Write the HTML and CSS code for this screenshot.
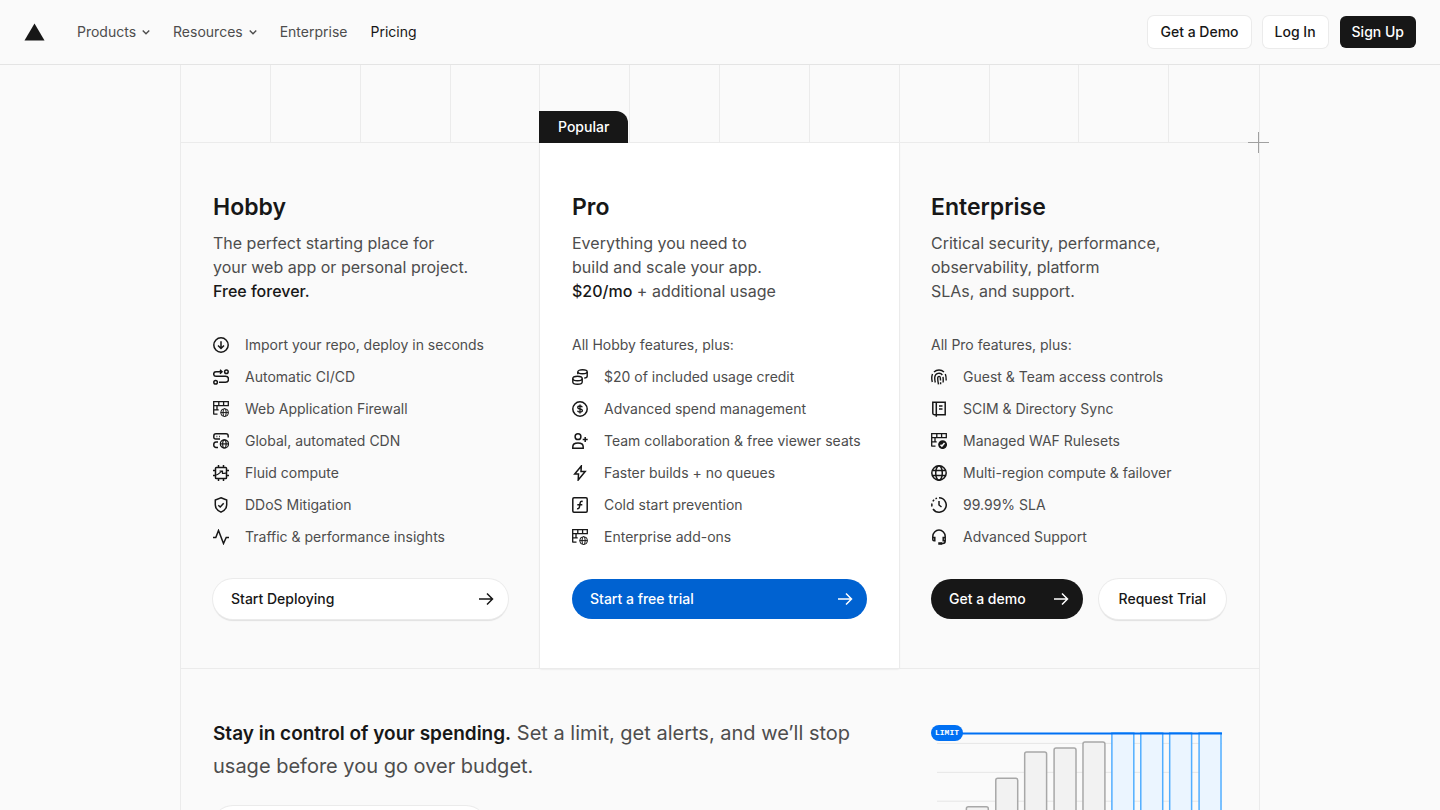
FILE: index.html
```html
<!DOCTYPE html>
<html lang="en">
<head>
  <meta charset="UTF-8" />
  <meta name="viewport" content="width=device-width, initial-scale=1.0"/>
  <title>Pricing</title>
  <link rel="stylesheet" href="styles.css">
</head>
<body>
  <!-- Icon sprite -->
  <svg class="sprite" aria-hidden="true">
    <symbol id="chevron" viewBox="0 0 16 16"><path d="M1.500 5 8 11.500 14.500 5" stroke-width="2.800"/></symbol>
    <symbol id="arrow" viewBox="0 0 16 16"><path d="M1 8h13.500M9 2.500 14.500 8 9 13.500"/></symbol>
    <symbol id="import" viewBox="0 0 16 16"><circle cx="8" cy="8" r="7.200"/><path d="M8 4.300v7M5 8.500l3 3 3-3"/></symbol>
    <symbol id="route" viewBox="0 0 16 16"><circle cx="13.400" cy="2.700" r="1.800"/><circle cx="2.600" cy="13.300" r="1.800"/><path d="M9 2.700H3a2.300 2.300 0 0 0 0 4.600h9.500a3 3 0 0 1 0 6H6M7 .7l2 2-2 2"/></symbol>
    <symbol id="firewall" viewBox="0 0 16 16"><path stroke-width="1.300" d="M.7 13.500V.7h14.600v4.500M.7 4.700h14.600M5.800.7v4M10.600.7v4M.7 8.900h5M4 4.700v4.200M.7 13.100h3.800"/><g stroke-width="1"><circle cx="11.600" cy="11.600" r="3.900"/><ellipse cx="11.600" cy="11.600" rx="1.600" ry="3.900"/><path d="M7.700 11.600h7.800"/></g></symbol>
    <symbol id="cdn" viewBox="0 0 16 16"><path d="M15.200 4.500V3A2.200 2.200 0 0 0 13 .8H3A2.200 2.200 0 0 0 .8 3v1.200A1.800 1.800 0 0 0 2.600 6H7M5 9H3a2.200 2.200 0 0 0-2.200 2.200v1A2.200 2.200 0 0 0 3 14.400h2M3.500 3.500h.8M6 3.500h.8"/><g stroke-width="1.200"><circle cx="11.400" cy="10.900" r="4.100"/><ellipse cx="11.400" cy="10.900" rx="1.700" ry="4.100"/><path d="M7.300 10.900h8.200"/></g></symbol>
    <symbol id="chip" viewBox="0 0 16 16"><rect x="2.500" y="2.500" width="11" height="11" rx=".8"/><path d="M5.500 0v2.500M10.500 0v2.500M5.500 13.500V16M10.500 13.500V16M0 5.500h2.500M0 10.500h2.500M13.500 5.500H16M13.500 10.500H16"/><path stroke-width="1.200" d="M3 10c3 0 3-2.800 6-3.500M6.500 6h3v2.500c1 0 2-.3 3.500-.3"/></symbol>
    <symbol id="shield" viewBox="0 0 16 16"><path d="M8 .8 13.700 3v5c0 3.300-2.400 5.600-5.700 7.200C4.700 13.600 2.300 11.300 2.300 8V3zM5.300 8.200l1.900 1.800 3.500-3.700"/></symbol>
    <symbol id="pulse" viewBox="0 0 16 16"><path d="M0 8.500h2.800L5.500 1.500l5 13 2.700-6H16"/></symbol>
    <symbol id="coins" viewBox="0 0 16 16"><g stroke-width="1.400"><ellipse cx="10.500" cy="2.800" rx="4.700" ry="2"/><path d="M5.800 3v2.300M15.200 3v4.200c0 1-1.200 1.600-3 1.900"/><ellipse cx="5.500" cy="9.500" rx="4.700" ry="2.200"/><path d="M.8 9.500V13c0 1.200 2.100 2.200 4.700 2.200s4.700-1 4.700-2.200V9.500"/></g></symbol>
    <symbol id="dollar" viewBox="0 0 16 16"><circle cx="8" cy="8" r="7.200"/><path stroke-width="1.300" d="M10.300 6.200C10 5.400 9.200 5 8 5c-1.400 0-2.300.5-2.300 1.500S6.500 7.800 8 8s2.400.5 2.400 1.500S9.400 11 8 11s-2.200-.4-2.500-1.300M8 3.500v9"/></symbol>
    <symbol id="user-plus" viewBox="0 0 16 16"><circle cx="6" cy="3.700" r="2.900"/><path d="M.8 15.200v-1.500C.8 11.500 2.700 10 6 10s5.200 1.500 5.200 3.700v1.500zM13.200 4v5M10.700 6.500h5"/></symbol>
    <symbol id="bolt" viewBox="0 0 16 16"><path d="M9.300 1 2.700 9h3.800l-.3 6 7-8.500H9z"/></symbol>
    <symbol id="function" viewBox="0 0 16 16"><rect x=".8" y=".8" width="14.400" height="14.400" rx="1.200"/><path d="M10.700 4.500c-1.800-.5-2.300.3-2.600 1.600L7.400 10c-.3 1.300-.9 2-2.400 1.600M5.300 7.700h5"/></symbol>
    <symbol id="fingerprint" viewBox="0 0 16 16"><path stroke-width="1.400" d="M3 3a7.200 7.200 0 0 1 10 0M1.300 13C.5 10 .5 7.500 1.500 5M14.300 5c.8 1.700.9 3.500.9 6.500M4.300 13.500C3.800 11.500 3.600 10 3.800 8c.4-4 5.500-5 7.500-2M12 7.800c.3 2 .3 3.700.1 5.700M7.500 15.300C7 13 6.500 10.500 6.800 8.500c.3-1.600 2.400-1.500 2.500.2.100 1 .2 1.800.2 2.800M9.600 13.300v2"/></symbol>
    <symbol id="book" viewBox="0 0 16 16"><path d="M1.800 1.200h12.400v12.500H3.300c-1 0-1.500-.6-1.500-1.400zM5.300 1.200v14.500M8 5h3.500M8 8h3.500"/></symbol>
    <symbol id="rules" viewBox="0 0 16 16"><path stroke-width="1.300" d="M.7 13.500V.7h14.600v4.500M.7 4.700h14.600M5.800.7v4M10.600.7v4M.7 8.900h5M4 4.700v4.200M.7 13.100h3.800"/><circle class="solid" cx="11.600" cy="11.600" r="3.700"/><path class="knock" d="m9.500 11.700 1.400 1.400 2.600-3"/></symbol>
    <symbol id="globe" viewBox="0 0 16 16"><circle cx="8" cy="8" r="7.200"/><ellipse cx="8" cy="8" rx="3.300" ry="7.200"/><path d="M1.500 5.500h13M1.500 10.500h13"/></symbol>
    <symbol id="clock" viewBox="0 0 16 16"><path d="M8 .8a7.200 7.200 0 1 1-6 11.200M1 9.500a7 7 0 0 1 0-3M1.900 4.300a7 7 0 0 1 1.200-1.500M4.500 1.700 6 1.100M8 4v4l2.500 2"/></symbol>
    <symbol id="headset" viewBox="0 0 16 16"><path d="M1.800 8.500V7.300a6.200 6.200 0 0 1 12.400 0V12c0 1.500-1 2.500-2.500 2.500H9.500M1.800 8.500h2v3.200H3c-.8 0-1.200-.5-1.200-1.200zM14.200 8.500h-2v3.200H14.200"/><path class="solid" d="M8 14h2.500v1H8z"/></symbol>
  </svg>

  <header class="header">
    <a class="logo" href="#" aria-label="Home">
      <svg viewBox="0 0 22 18"><path d="M11 0 21.500 18H.5z"/></svg>
    </a>
    <nav class="nav">
      <button class="nav-item">Products <svg class="chevron"><use href="#chevron"/></svg></button>
      <button class="nav-item">Resources <svg class="chevron"><use href="#chevron"/></svg></button>
      <a class="nav-item" href="#">Enterprise</a>
      <a class="nav-item current" href="#">Pricing</a>
    </nav>
    <div class="header-actions">
      <button class="btn">Get a Demo</button>
      <button class="btn">Log In</button>
      <button class="btn dark">Sign Up</button>
    </div>
  </header>

  <main class="container">
    <div class="guides">
      <span></span><span></span><span></span><span></span><span></span><span></span>
      <span></span><span></span><span></span><span></span><span></span><span></span>
    </div>

    <!-- Plans -->
    <div class="plans">
      <section class="plan">
        <h2>Hobby</h2>
        <p class="summary">The perfect starting place for<br>your web app or personal project.<br><strong>Free forever.</strong></p>
        <ul class="features">
          <li><svg class="icon"><use href="#import"/></svg>Import your repo, deploy in seconds</li>
          <li><svg class="icon"><use href="#route"/></svg>Automatic CI/CD</li>
          <li><svg class="icon"><use href="#firewall"/></svg>Web Application Firewall</li>
          <li><svg class="icon"><use href="#cdn"/></svg>Global, automated CDN</li>
          <li><svg class="icon"><use href="#chip"/></svg>Fluid compute</li>
          <li><svg class="icon"><use href="#shield"/></svg>DDoS Mitigation</li>
          <li><svg class="icon"><use href="#pulse"/></svg>Traffic &amp; performance insights</li>
        </ul>
        <div class="plan-actions">
          <button class="btn pill wide">Start Deploying <svg class="icon"><use href="#arrow"/></svg></button>
        </div>
      </section>

      <section class="plan popular">
        <span class="tag">Popular</span>
        <h2>Pro</h2>
        <p class="summary">Everything you need to<br>build and scale your app.<br><strong>$20/mo</strong> + additional usage</p>
        <ul class="features">
          <li>All Hobby features, plus:</li>
          <li><svg class="icon"><use href="#coins"/></svg>$20 of included usage credit</li>
          <li><svg class="icon"><use href="#dollar"/></svg>Advanced spend management</li>
          <li><svg class="icon"><use href="#user-plus"/></svg>Team collaboration &amp; free viewer seats</li>
          <li><svg class="icon"><use href="#bolt"/></svg>Faster builds + no queues</li>
          <li><svg class="icon"><use href="#function"/></svg>Cold start prevention</li>
          <li><svg class="icon"><use href="#firewall"/></svg>Enterprise add-ons</li>
        </ul>
        <div class="plan-actions">
          <button class="btn pill wide blue">Start a free trial <svg class="icon"><use href="#arrow"/></svg></button>
        </div>
      </section>

      <section class="plan">
        <span class="cross"></span>
        <h2>Enterprise</h2>
        <p class="summary">Critical security, performance,<br>observability, platform<br>SLAs, and support.</p>
        <ul class="features">
          <li>All Pro features, plus:</li>
          <li><svg class="icon"><use href="#fingerprint"/></svg>Guest &amp; Team access controls</li>
          <li><svg class="icon"><use href="#book"/></svg>SCIM &amp; Directory Sync</li>
          <li><svg class="icon"><use href="#rules"/></svg>Managed WAF Rulesets</li>
          <li><svg class="icon"><use href="#globe"/></svg>Multi-region compute &amp; failover</li>
          <li><svg class="icon"><use href="#clock"/></svg>99.99% SLA</li>
          <li><svg class="icon"><use href="#headset"/></svg>Advanced Support</li>
        </ul>
        <div class="plan-actions">
          <button class="btn pill wide dark">Get a demo <svg class="icon"><use href="#arrow"/></svg></button>
          <button class="btn pill">Request Trial</button>
        </div>
      </section>
    </div>

    <!-- Spend management -->
    <section class="spend">
      <div class="spend-text">
        <p><strong>Stay in control of your spending.</strong> Set a limit, get alerts, and we’ll stop usage before you go over budget.</p>
        <button class="btn pill wide">Learn about Spend Management <svg class="icon"><use href="#arrow"/></svg></button>
      </div>
      <div class="chart">
        <span class="limit">LIMIT</span>
        <svg viewBox="0 0 296 160">
          <path class="rule" d="M6 18.500h286M6 47.500h286M6 76.500h286M6 105.500h286"/>
          <g class="bars">
            <rect x="35.500" y="82" width="22" height="90" rx="2"/>
            <rect x="65" y="53.500" width="22" height="120" rx="2"/>
            <rect x="94" y="27" width="22" height="150" rx="2"/>
            <rect x="123.500" y="23" width="22" height="150" rx="2"/>
            <rect x="152.500" y="17" width="22" height="160" rx="2"/>
          </g>
          <g class="bars over">
            <rect x="181.500" y="8" width="22" height="160"/>
            <rect x="210.500" y="8" width="22" height="160"/>
            <rect x="239.500" y="8" width="22" height="160"/>
            <rect x="269" y="8" width="22" height="160"/>
          </g>
          <path class="limit-line" d="M30 8.500h262"/>
        </svg>
      </div>
    </section>
  </main>
</body>
</html>
```
FILE: styles.css
```css
* {
  box-sizing: border-box;
}

body {
  margin: 0;
  font-family: Inter, "Liberation Sans", sans-serif;
  font-size: 14px;
  line-height: 20px;
  background-color: #fafafa;
  color: #4d4d4d;
}

h2, p, ul {
  margin: 0;
  padding: 0;
}

strong {
  font-weight: 500;
  color: #171717;
}

.sprite {
  display: none;
}

symbol {
  fill: none;
  stroke: currentColor;
  stroke-width: 1.5;
}

.solid {
  fill: currentColor;
}

.knock {
  stroke: #fafafa;
}

.icon {
  width: 16px;
  height: 16px;
  flex-shrink: 0;
}

/* Header */
.header {
  display: flex;
  align-items: center;
  height: 65px;
  padding: 0 24px;
  border-bottom: 1px solid #e4e4e4;
}

.logo svg {
  display: block;
  width: 21px;
  height: 18px;
  fill: #171717;
}

.nav {
  display: flex;
  flex: 1;
  gap: 23px;
  margin-left: 32px;
}

.nav-item {
  display: flex;
  align-items: center;
  gap: 6px;
  padding: 0;
  border: none;
  background: none;
  font: inherit;
  color: #4d4d4d;
  text-decoration: none;
  cursor: pointer;
}

.nav-item.current {
  color: #171717;
}

.chevron {
  width: 8px;
  height: 8px;
}

.header-actions {
  display: flex;
  gap: 12px;
}

.btn {
  height: 32px;
  padding: 0 12px;
  border: none;
  border-radius: 6px;
  background-color: #fff;
  box-shadow: 0 0 0 1px #ebebeb;
  font: inherit;
  font-weight: 500;
  color: #171717;
  white-space: nowrap;
  cursor: pointer;
}

.btn.pill {
  height: 40px;
  padding: 0 20px;
  border-radius: 20px;
  box-shadow: 0 0 0 1px #ebebeb, 0 2px 1px #e0e0e0;
}

.btn.wide {
  display: flex;
  flex: 1;
  align-items: center;
  justify-content: space-between;
  gap: 6px;
  padding: 0 14px 0 18px;
}

.btn.dark {
  background-color: #171717;
  box-shadow: none;
  color: #fff;
}

.btn.blue {
  background-color: #0062d1;
  box-shadow: none;
  color: #fff;
}

/* Grid */
.container {
  width: 100%;
  max-width: 1080px;
  margin: 0 auto;
  border-left: 1px solid #ebebeb;
  border-right: 1px solid #ebebeb;
}

.guides {
  display: grid;
  grid-template-columns: repeat(12, 1fr);
  height: 77px;
}

.guides span:not(:last-child) {
  border-right: 1px solid #ebebeb;
}

/* Plans */
.plans {
  display: grid;
  grid-template-columns: repeat(3, 1fr);
  padding-right: 1px;
  border-top: 1px solid #ebebeb;
  border-bottom: 1px solid #ebebeb;
}

.plan {
  position: relative;
  padding: 48px 32px 49px;
}

.plan.popular {
  background-color: #fff;
  box-shadow: 0 0 0 1px #ebebeb, 0 1px 2px #ddd;
}

.tag {
  position: absolute;
  left: -1px;
  bottom: 100%;
  padding: 6px 19px;
  border-top-right-radius: 12px;
  background-color: #171717;
  font-weight: 500;
  color: #fff;
}

.cross {
  position: absolute;
  top: -11px;
  right: -11px;
  width: 21px;
  height: 21px;
  background:
    linear-gradient(#a0a0a0, #a0a0a0) center / 1px 100% no-repeat,
    linear-gradient(#a0a0a0, #a0a0a0) center / 100% 1px no-repeat;
}

.plan h2 {
  font-size: 23px;
  font-weight: 600;
  line-height: 32px;
  color: #171717;
}

.summary {
  margin-top: 8px;
  font-size: 16px;
  line-height: 24px;
}

.features {
  display: flex;
  flex-direction: column;
  gap: 12px;
  margin-top: 32px;
  list-style: none;
}

.features li {
  display: flex;
  align-items: center;
  gap: 16px;
}

.features .icon {
  color: #171717;
}

.plan-actions {
  display: flex;
  gap: 16px;
  margin-top: 32px;
}

/* Spend management */
.spend {
  display: grid;
  grid-template-columns: 2fr 1fr;
  padding-right: 1px;
}

.spend-text {
  padding: 48px 32px;
}

.spend-text p {
  margin-bottom: 24px;
  font-size: 20px;
  line-height: 32px;
}

.spend-text strong {
  font-size: 19px;
  font-weight: 600;
}

.chart {
  position: relative;
  padding: 56px 32px 0;
}

.chart svg {
  display: block;
  width: 100%;
  fill: none;
}

.limit {
  position: absolute;
  top: 56px;
  left: 32px;
  padding: 0 4px;
  border-radius: 8px;
  background-color: #0070f3;
  font-family: "Liberation Mono", monospace;
  font-size: 8px;
  font-weight: 700;
  line-height: 16px;
  color: #fff;
}

.rule {
  stroke: #e6e6e6;
}

.bars {
  fill: #f2f2f2;
  stroke: #a8a8a8;
  stroke-width: 1.5;
}

.bars.over {
  fill: #ebf5ff;
  stroke: #52aeff;
}

.limit-line {
  stroke: #0070f3;
  stroke-width: 2;
}
```
